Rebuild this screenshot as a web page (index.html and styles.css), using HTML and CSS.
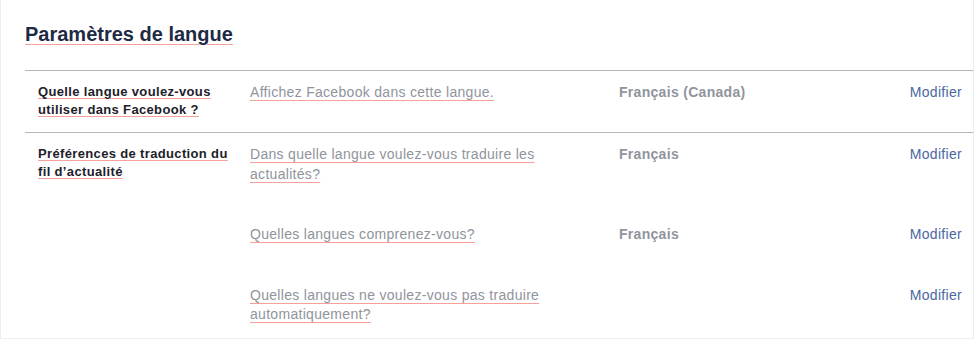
FILE: index.html
```html
<!DOCTYPE html>
<html lang="fr">
<head>
    <meta charset="UTF-8">
    <meta name="viewport" content="width=device-width, initial-scale=1.0">
    <title>Paramètres de langue</title>
    <link rel="stylesheet" href="styles.css">
</head>
<body>
    <div class="panel">
        <h2 class="title"><span>Paramètres de langue</span></h2>

        <!-- Settings list -->
        <div class="list">
            <div class="row">
                <div class="label"><span>Quelle langue voulez-vous utiliser dans Facebook ?</span></div>
                <div class="items">
                    <div class="item">
                        <div class="desc"><span>Affichez Facebook dans cette langue.</span></div>
                        <div class="value">Français (Canada)</div>
                        <a class="edit" href="#">Modifier</a>
                    </div>
                </div>
            </div>

            <div class="row">
                <div class="label"><span>Préférences de traduction du fil d’actualité</span></div>
                <div class="items">
                    <div class="item">
                        <div class="desc"><span>Dans quelle langue voulez-vous traduire les actualités?</span></div>
                        <div class="value">Français</div>
                        <a class="edit" href="#">Modifier</a>
                    </div>
                    <div class="item">
                        <div class="desc"><span>Quelles langues comprenez-vous?</span></div>
                        <div class="value">Français</div>
                        <a class="edit" href="#">Modifier</a>
                    </div>
                    <div class="item">
                        <div class="desc"><span>Quelles langues ne voulez-vous pas traduire automatiquement?</span></div>
                        <div class="value"></div>
                        <a class="edit" href="#">Modifier</a>
                    </div>
                </div>
            </div>
        </div>
    </div>
</body>
</html>
```

FILE: styles.css
```css
body {
    font-family: "Liberation Sans", Arial, sans-serif;
    margin: 0;
    padding: 0;
    background-color: #fff;
}
.panel {
    border: 1px solid #eceef1;
    border-top: none;
    background-color: #fff;
}
.title {
    margin: 0;
    padding: 22px 0 0 24px;
    font-size: 20px;
    line-height: 24px;
    font-weight: bold;
    color: #1e2a45;
}
.title span,
.label span,
.desc span {
    text-decoration: underline;
    text-decoration-color: #f4a09b;
    text-decoration-thickness: 1px;
}
.title span {
    text-underline-offset: 3px;
}
.list {
    margin: 24px 0 0 24px;
}
.row {
    display: flex;
    border-top: 1px solid #b7b7b7;
    padding: 12px 0 13px;
}
.label {
    flex: none;
    width: 200px;
    padding-left: 13px;
    margin-right: 12px;
    font-size: 13px;
    line-height: 18px;
    font-weight: bold;
    letter-spacing: 0.35px;
    color: #1d2129;
}
.label span {
    text-underline-offset: 2px;
}
.items {
    flex: 1;
    display: flex;
    flex-direction: column;
    gap: 41px;
}
.item {
    display: flex;
    font-size: 14px;
    line-height: 19.6px;
    letter-spacing: 0.3px;
    padding-right: 11px;
}
.desc {
    flex: none;
    width: 369px;
    padding-right: 30px;
    box-sizing: border-box;
    color: #90949c;
}
.desc span {
    text-underline-offset: 3px;
}
.value {
    flex: 1;
    font-weight: bold;
    color: #90949c;
}
.edit {
    color: #4b67a1;
    text-decoration: none;
}
```
